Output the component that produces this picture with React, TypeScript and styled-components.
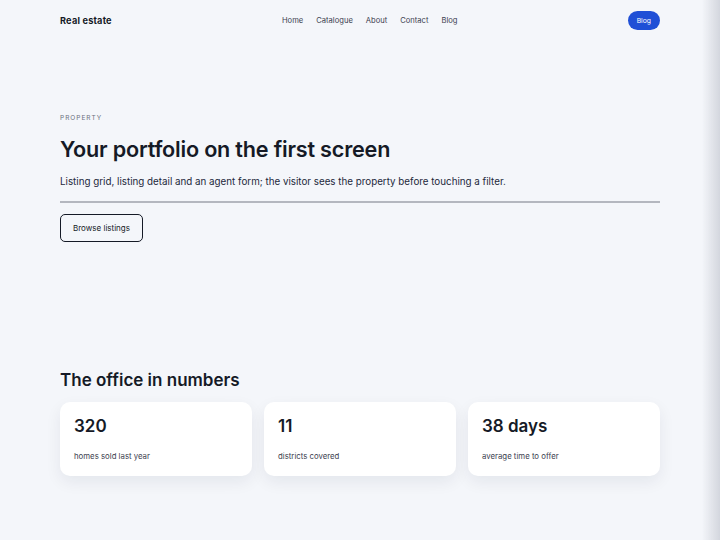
import React from 'react';
import styled, { createGlobalStyle } from 'styled-components';

const ink = '#151a26';
const muted = '#3c4150';
const page = '#f4f6fa';
const blue = '#1f4fd6';

const GlobalStyle = createGlobalStyle`
  html, body {
    margin: 0;
    padding: 0;
    background: ${page};
  }
  body {
    font-family: Inter, "Noto Sans", "Liberation Sans", sans-serif;
    color: ${ink};
  }
`;

const Page = styled.div`
  min-height: 540px;
  background: ${page};
`;

// soft shade along the right edge of the viewport
const EdgeShade = styled.div`
  position: fixed;
  top: 0;
  right: 0;
  width: 18px;
  height: 100%;
  pointer-events: none;
  background: linear-gradient(to right, rgba(200, 203, 212, 0), rgba(200, 203, 212, 0.75));
`;

const Wrap = styled.div`
  width: 600px;
  margin: 0 auto;
`;

const Header = styled.header`
  height: 41px;
  display: flex;
  justify-content: space-between;
  align-items: center;
`;

const Brand = styled.div`
  font-size: 9.2px;
  font-weight: 700;
  letter-spacing: 0.2px;
`;

const Nav = styled.nav`
  display: flex;
  gap: 13px;
  font-size: 7.6px;
  color: ${muted};
`;

const PillButton = styled.button`
  height: 19px;
  padding: 0 9px;
  border: none;
  border-radius: 10px;
  background: ${blue};
  color: #fff;
  font-family: inherit;
  font-size: 6.8px;
`;

const Hero = styled.section`
  padding-top: 73px;
  height: 328px;
  box-sizing: border-box;
`;

const Eyebrow = styled.div`
  font-size: 6.5px;
  letter-spacing: 1px;
  color: #6b7080;
  text-transform: uppercase;
`;

const Title = styled.h1`
  margin: 14px 0 0;
  font-size: 21.6px;
  font-weight: 600;
  letter-spacing: -0.2px;
  line-height: 26px;
`;

const Lead = styled.p`
  margin: 13px 0 0;
  font-size: 9.8px;
  line-height: 14px;
  color: #23283a;
`;

const Rule = styled.hr`
  margin: 12px 0 0;
  border: none;
  height: 2px;
  background: #b4b7bf;
`;

const OutlineButton = styled.button`
  margin-top: 11px;
  height: 28px;
  padding: 0 12px;
  border: 1px solid ${ink};
  border-radius: 5px;
  background: transparent;
  color: ${ink};
  font-family: inherit;
  font-size: 8px;
`;

const SectionTitle = styled.h2`
  margin: 0;
  font-size: 17px;
  font-weight: 600;
  line-height: 22px;
`;

const StatGrid = styled.div`
  margin-top: 11px;
  display: grid;
  grid-template-columns: repeat(3, 1fr);
  gap: 12px;
`;

const StatCard = styled.div`
  height: 74px;
  box-sizing: border-box;
  padding: 14px 14px 0;
  background: #fff;
  border-radius: 10px;
  box-shadow: 0 6px 16px rgba(20, 30, 60, 0.07);
`;

const StatValue = styled.div`
  font-size: 17px;
  font-weight: 600;
  line-height: 21px;
`;

const StatLabel = styled.div`
  margin-top: 14px;
  font-size: 7.8px;
  color: ${muted};
`;

const stats = [
  { value: '320', label: 'homes sold last year' },
  { value: '11', label: 'districts covered' },
  { value: '38 days', label: 'average time to offer' },
];

export default function App() {
  return (
    <Page>
      <GlobalStyle />
      <Wrap>
        <Header>
          <Brand>Real estate</Brand>
          <Nav>
            <span>Home</span>
            <span>Catalogue</span>
            <span>About</span>
            <span>Contact</span>
            <span>Blog</span>
          </Nav>
          <PillButton>Blog</PillButton>
        </Header>
        <Hero>
          <Eyebrow>Property</Eyebrow>
          <Title>Your portfolio on the first screen</Title>
          <Lead>
            Listing grid, listing detail and an agent form; the visitor sees the property before touching a filter.
          </Lead>
          <Rule />
          <OutlineButton>Browse listings</OutlineButton>
        </Hero>
        <section>
          <SectionTitle>The office in numbers</SectionTitle>
          <StatGrid>
            {stats.map(s => (
              <StatCard key={s.label}>
                <StatValue>{s.value}</StatValue>
                <StatLabel>{s.label}</StatLabel>
              </StatCard>
            ))}
          </StatGrid>
        </section>
      </Wrap>
      <EdgeShade />
    </Page>
  );
}
